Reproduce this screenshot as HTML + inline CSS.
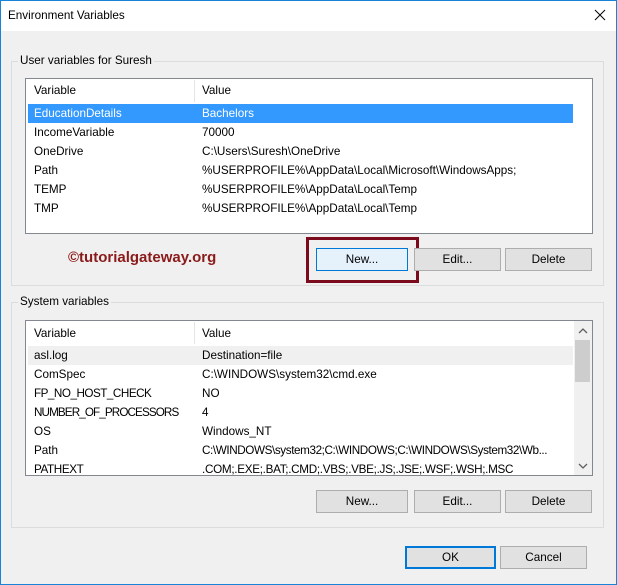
<!DOCTYPE html>
<html><head><style>
*{margin:0;padding:0;box-sizing:border-box}
body{width:617px;height:585px;position:relative;background:#f0f0f0;font-family:"Liberation Sans",sans-serif;font-size:11.7px;color:#000;overflow:hidden}
.a{position:absolute}
.win{left:0;top:0;width:617px;height:585px;border:1px solid #1883d7}
.title{left:1px;top:1px;width:615px;height:30px;background:#fff}
.grp{border:1px solid #dcdcdc}
.lbl{background:#f0f0f0;padding:0 2px;line-height:14px}
.list{background:#fff;border:1px solid #828790}
.row{position:absolute;left:2px;width:545px;height:19px;line-height:20px}
.row span{position:absolute;white-space:nowrap}
.c1{left:6px}.c2{left:174px}
.btn{background:#e1e1e1;border:1px solid #adadad;text-align:center;line-height:21px;height:23px}
</style></head><body>
<div class="a win"></div>
<div class="a title"></div>
<div class="a" style="left:8px;top:9px">Environment Variables</div>
<svg class="a" style="left:594px;top:9px" width="12" height="12"><path d="M1 1L11 11M11 1L1 11" stroke="#000" stroke-width="1"/></svg>

<div class="a grp" style="left:11px;top:61px;width:593px;height:225px"></div>
<div class="a lbl" style="left:18px;top:54px">User variables for Suresh</div>
<div class="a list" style="left:25px;top:78px;width:568px;height:156px">
 <div class="a" style="left:168px;top:1px;width:1px;height:22px;background:#e5e5e5"></div>
 <div class="row" style="top:2px"><span class="c1">Variable</span><span class="c2">Value</span></div>
 <div class="row" style="top:25px;background:#3399ff;color:#fff"><span class="c1">EducationDetails</span><span class="c2">Bachelors</span></div>
 <div class="row" style="top:44px"><span class="c1">IncomeVariable</span><span class="c2">70000</span></div>
 <div class="row" style="top:63px"><span class="c1">OneDrive</span><span class="c2">C:\Users\Suresh\OneDrive</span></div>
 <div class="row" style="top:82px"><span class="c1">Path</span><span class="c2">%USERPROFILE%\AppData\Local\Microsoft\WindowsApps;</span></div>
 <div class="row" style="top:101px"><span class="c1">TEMP</span><span class="c2">%USERPROFILE%\AppData\Local\Temp</span></div>
 <div class="row" style="top:120px"><span class="c1">TMP</span><span class="c2">%USERPROFILE%\AppData\Local\Temp</span></div>
</div>
<div class="a" style="left:68px;top:249px;color:#8b1a1a;font-weight:bold;font-size:15px">©tutorialgateway.org</div>
<div class="a" style="left:306px;top:237px;width:113px;height:46px;border:3px solid #7b0b1c"></div>
<div class="a btn" style="left:316px;top:248px;width:92px;background:#e5f1fb;border-color:#0078d7">New...</div>
<div class="a btn" style="left:414px;top:248px;width:87px">Edit...</div>
<div class="a btn" style="left:505px;top:248px;width:87px">Delete</div>

<div class="a grp" style="left:11px;top:302px;width:593px;height:226px"></div>
<div class="a lbl" style="left:18px;top:295px">System variables</div>
<div class="a list" style="left:25px;top:320px;width:568px;height:156px;overflow:hidden">
 <div class="a" style="left:168px;top:1px;width:1px;height:22px;background:#e5e5e5"></div>
 <div class="row" style="top:3px"><span class="c1">Variable</span><span class="c2">Value</span></div>
 <div class="row" style="top:25px;background:#f0f0f0"><span class="c1">asl.log</span><span class="c2">Destination=file</span></div>
 <div class="row" style="top:44px"><span class="c1">ComSpec</span><span class="c2">C:\WINDOWS\system32\cmd.exe</span></div>
 <div class="row" style="top:63px"><span class="c1" style="letter-spacing:-0.5px">FP_NO_HOST_CHECK</span><span class="c2">NO</span></div>
 <div class="row" style="top:82px"><span class="c1" style="letter-spacing:-0.9px">NUMBER_OF_PROCESSORS</span><span class="c2">4</span></div>
 <div class="row" style="top:101px"><span class="c1">OS</span><span class="c2">Windows_NT</span></div>
 <div class="row" style="top:120px"><span class="c1">Path</span><span class="c2" style="letter-spacing:-0.4px">C:\WINDOWS\system32;C:\WINDOWS;C:\WINDOWS\System32\Wb...</span></div>
 <div class="row" style="top:139px"><span class="c1" style="letter-spacing:-0.4px">PATHEXT</span><span class="c2" style="letter-spacing:-0.3px">.COM;.EXE;.BAT;.CMD;.VBS;.VBE;.JS;.JSE;.WSF;.WSH;.MSC</span></div>
 <div class="a" style="left:548px;top:0;width:18px;height:154px;background:#f0f0f0"></div>
 <div class="a" style="left:549px;top:19px;width:15px;height:42px;background:#cdcdcd"></div>
 <svg class="a" style="left:552px;top:7px" width="10" height="6"><path d="M1 5L5 1L9 5" stroke="#606060" fill="none" stroke-width="1.3"/></svg>
 <svg class="a" style="left:552px;top:142px" width="10" height="6"><path d="M1 1L5 5L9 1" stroke="#606060" fill="none" stroke-width="1.3"/></svg>
</div>
<div class="a btn" style="left:316px;top:490px;width:92px">New...</div>
<div class="a btn" style="left:414px;top:490px;width:87px">Edit...</div>
<div class="a btn" style="left:505px;top:490px;width:87px">Delete</div>

<div class="a btn" style="left:405px;top:546px;width:91px;border:2px solid #0078d7;line-height:19px">OK</div>
<div class="a btn" style="left:500px;top:546px;width:87px">Cancel</div>
</body></html>
